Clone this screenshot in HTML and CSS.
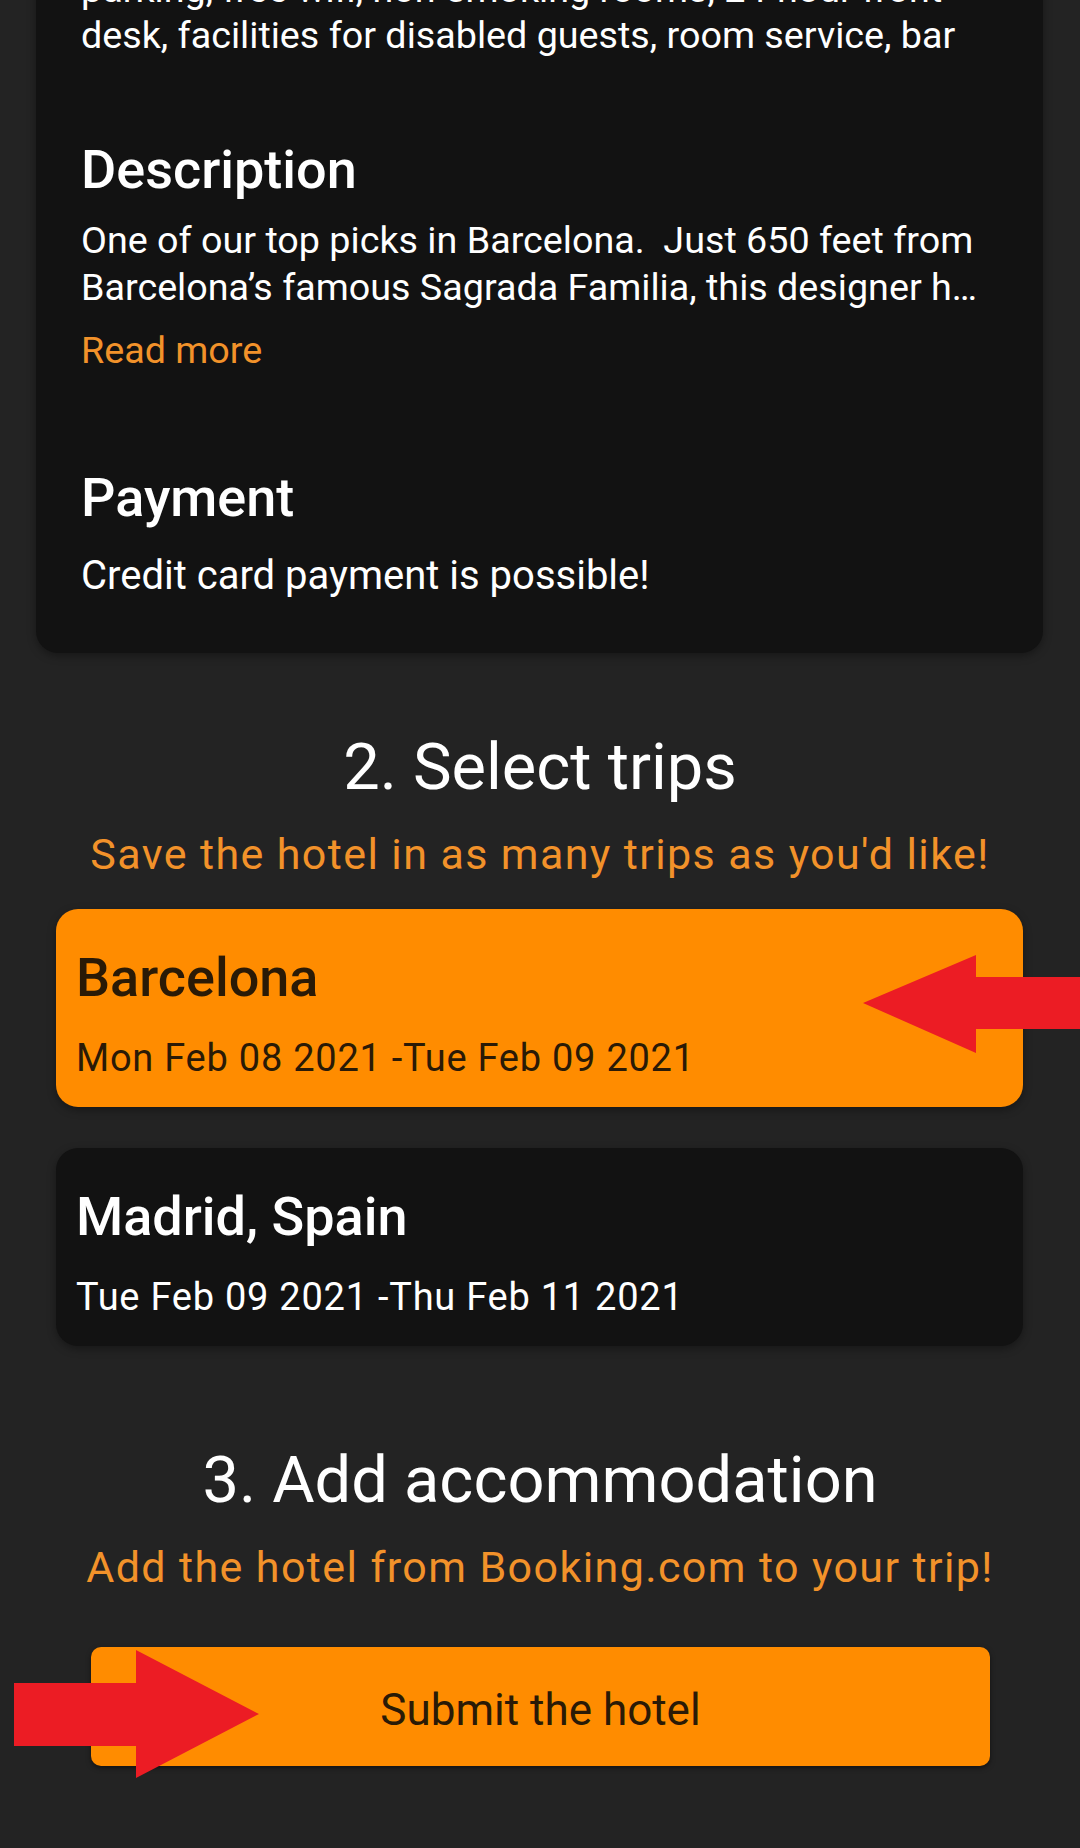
FILE: index.html
```html
<!DOCTYPE html>
<html lang="en">
<head>
<meta charset="utf-8">
<title>Add hotel</title>
<link rel="stylesheet" href="styles.css">
</head>
<body>
<div class="page">
  <section class="info-card">
    <p class="body-text">parking, free wifi, non-smoking rooms, 24-hour front<br>desk, facilities for disabled guests, room service, bar</p>
    <h2 class="card-heading">Description</h2>
    <p class="body-text desc">One of our top picks in Barcelona.&nbsp; Just 650 feet from<br>Barcelona’s famous Sagrada Familia, this designer h…</p>
    <a class="read-more">Read more</a>
    <h2 class="card-heading payment">Payment</h2>
    <p class="body-text credit">Credit card payment is possible!</p>
  </section>

  <h1 class="section-title">2. Select trips</h1>
  <p class="section-sub">Save the hotel in as many trips as you'd like!</p>

  <div class="trips">
    <div class="trip selected">
      <div class="trip-name">Barcelona</div>
      <div class="trip-dates">Mon Feb 08 2021 -Tue Feb 09 2021</div>
    </div>
    <div class="trip">
      <div class="trip-name">Madrid, Spain</div>
      <div class="trip-dates">Tue Feb 09 2021 -Thu Feb 11 2021</div>
    </div>
  </div>

  <h1 class="section-title second">3. Add accommodation</h1>
  <p class="section-sub">Add the hotel from Booking.com to your trip!</p>

  <button class="submit">Submit the hotel</button>

  <svg class="arrow arrow-left" width="220" height="102" viewBox="0 0 220 102">
    <polygon points="3,50 116,2 116,24 220,24 220,76 116,76 116,100" fill="#ec1c24"/>
  </svg>
  <svg class="arrow arrow-right" width="250" height="132" viewBox="0 0 250 132">
    <polygon points="2,35 124,35 124,2 247,66 124,130 124,98 2,98" fill="#ec1c24"/>
  </svg>
</div>
</body>
</html>
```
FILE: styles.css
```css
* { box-sizing: border-box; }
html, body { margin: 0; padding: 0; background: #232323; }
body { font-family: Roboto, "Noto Sans", sans-serif; color: #fff; }

.page {
  position: relative;
  width: 1080px;
  height: 1848px;
  overflow: hidden;
  background: #232323;
}

.info-card {
  margin: -54px 37px 0 36px;
  padding: 20px 45px 53px;
  background: #121212;
  border-radius: 0 0 22px 22px;
  box-shadow: 0 3px 8px rgba(0, 0, 0, 0.35);
}

.body-text {
  margin: 0;
  font-size: 37.7px;
  line-height: 46px;
  color: #fff;
  white-space: nowrap;
}
.body-text.desc { line-height: 46.5px; }
.body-text.credit {
  margin-top: 22px;
  font-size: 40px;
  line-height: 48px;
}

.card-heading {
  margin: 80px 0 15px;
  font-size: 54px;
  line-height: 64px;
  font-weight: 500;
}
.card-heading.payment { margin: 93px 0 0; }

.read-more {
  display: block;
  margin-top: 17px;
  font-size: 37.7px;
  line-height: 46px;
  color: #f2922a;
}

.section-title {
  margin: 74px 0 0;
  text-align: center;
  font-size: 65px;
  line-height: 80px;
  font-weight: 400;
  color: #fff;
}
.section-title.second { margin-top: 94px; }

.section-sub {
  margin: 22px 0 0;
  text-align: center;
  font-size: 43px;
  line-height: 50px;
  letter-spacing: 1.4px;
  color: #f2922a;
}

.trips {
  display: flex;
  flex-direction: column;
  gap: 41px;
  margin: 30px 57px 0 56px;
}

.trip {
  padding: 38px 20px 26px;
  background: #121212;
  border-radius: 22px;
  box-shadow: 0 3px 8px rgba(0, 0, 0, 0.35);
  display: flex;
  flex-direction: column;
  gap: 26px;
  color: #fff;
}
.trip.selected {
  background: #ff8c00;
  color: #2a1a06;
}

.trip-name {
  font-size: 54px;
  line-height: 62px;
  font-weight: 500;
}
.trip-dates {
  font-size: 38px;
  line-height: 46px;
  letter-spacing: 0.75px;
}

.submit {
  display: flex;
  align-items: center;
  justify-content: center;
  width: 899px;
  height: 119px;
  margin: 55px 0 0 91px;
  padding: 6px 0 0;
  border: none;
  border-radius: 10px;
  background: #ff8c00;
  box-shadow: 0 2px 5px rgba(0, 0, 0, 0.5);
  font-family: Roboto, "Noto Sans", sans-serif;
  font-size: 44px;
  color: #2a1a06;
}

.arrow { position: absolute; }
.arrow-left { left: 860px; top: 953px; }
.arrow-right { left: 12px; top: 1648px; }
```
